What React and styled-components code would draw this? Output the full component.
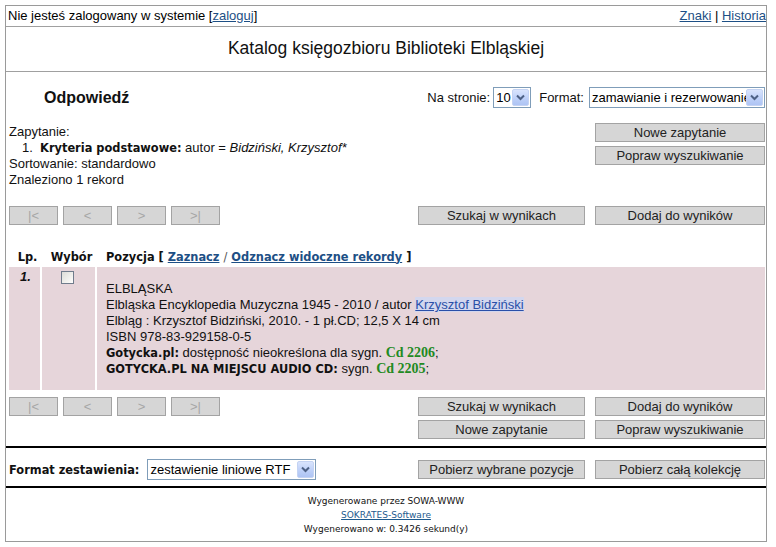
import React from "react";
import styled, { createGlobalStyle } from "styled-components";

const Global = createGlobalStyle`
  html, body { margin: 0; padding: 0; background: #fff; }
  body { font-family: "Liberation Sans", Arial, sans-serif; font-size: 13px; color: #000; }
  * { box-sizing: border-box; }
`;

const Page = styled.div`
  margin: 5px 0 0 5px;
  width: 762px;
  border: 1px solid #9a9a9a;
  line-height: 16px;
`;

const TopBar = styled.div`
  height: 21px;
  display: flex;
  justify-content: space-between;
  align-items: center;
  padding: 0 0 1px 2px;
  border-bottom: 1px solid #a0a0a0;
`;

const Link = styled.a`
  color: ${(p) => (p.$tone === "author" ? "#2a4fa8" : "#1d4f85")};
  text-decoration: underline;
  cursor: pointer;
  font-weight: ${(p) => (p.$bold ? "bold" : "inherit")};
  background: ${(p) => (p.$tone === "author" ? "#d3d7ee" : "transparent")};
`;

const TitleBar = styled.div`
  height: 45px;
  display: flex;
  align-items: center;
  justify-content: center;
  font-size: 17.5px;
  color: #111;
  border-bottom: 1px solid #a0a0a0;
  padding-bottom: 2px;
`;

const Main = styled.div`
  padding: 0 1px 0 3px;
`;

const HeadingRow = styled.div`
  height: 51px;
  display: flex;
  align-items: center;
  justify-content: space-between;
`;

const Heading = styled.div`
  font-size: 16px;
  font-weight: bold;
  padding-left: 35px;
  color: #111;
`;

const Controls = styled.div`
  display: flex;
  align-items: center;
`;

const Label = styled.span`
  margin-right: ${(p) => p.$mr || 5}px;
  margin-left: ${(p) => p.$ml || 0}px;
  color: #111;
`;

const SelectBox = styled.div`
  width: ${(p) => p.$width}px;
  height: 21px;
  border: 1px solid #7f9db9;
  background: #fff;
  display: flex;
  align-items: center;
  padding: 1px 1px 1px 0;
`;

const SelectText = styled.span`
  flex: 1;
  overflow: hidden;
  white-space: nowrap;
  padding-left: 2px;
  color: #000;
`;

const SelectArrow = styled.span`
  width: 17px;
  height: 17px;
  flex: none;
  border: 1px solid #c4d3f3;
  border-radius: 2px;
  background: linear-gradient(180deg, #d9e4fd 0%, #bccff8 60%, #aec4f4 100%);
  display: flex;
  align-items: center;
  justify-content: center;
`;

const Select = ({ width, children }) => (
  <SelectBox $width={width}>
    <SelectText>{children}</SelectText>
    <SelectArrow>
      <svg width="9" height="7" viewBox="0 0 9 7">
        <path d="M1 1.5 L4.5 5 L8 1.5" fill="none" stroke="#4d6185" strokeWidth="2" />
      </svg>
    </SelectArrow>
  </SelectBox>
);

const QueryBlock = styled.div`
  display: flex;
  justify-content: space-between;
  align-items: flex-start;
`;

const QueryText = styled.div`
  line-height: 16px;
  color: #111;
  padding-top: 1px;
  margin-bottom: -1px;
`;

const Indent = styled.div`
  padding-left: 13px;
`;

const Strong = styled.span`
  font-family: "DejaVu Sans", Verdana, sans-serif;
  font-weight: bold;
  font-size: 11.4px;
  color: #111;
`;

const ButtonColumn = styled.div`
  display: flex;
  flex-direction: column;
  align-items: flex-end;
  gap: 4px;
`;

const Button = styled.button`
  width: ${(p) => p.$width || 170}px;
  height: 19px;
  padding: 0;
  margin: 0;
  border: 1px solid #a3a3a3;
  background: #d6d6d6;
  font-family: "Liberation Sans", Arial, sans-serif;
  font-size: 13px;
  line-height: 16px;
  color: ${(p) => (p.$disabled ? "#a6a6a6" : "#222")};
  cursor: ${(p) => (p.$disabled ? "default" : "pointer")};
`;

const PagerRow = styled.div`
  display: flex;
  justify-content: space-between;
  align-items: center;
  margin-top: ${(p) => p.$mt || 0}px;
`;

const Group = styled.div`
  display: flex;
  gap: ${(p) => p.$gap}px;
  margin-left: ${(p) => (p.$right ? "auto" : "0")};
`;

const ResultsGrid = styled.div`
  display: grid;
  grid-template-columns: 31px 53px 1fr;
  column-gap: 2px;
  margin-top: 21px;
`;

const HeadCell = styled.div`
  height: 21px;
  display: flex;
  align-items: center;
  justify-content: ${(p) => (p.$left ? "flex-start" : "center")};
  padding-left: ${(p) => (p.$left ? 9 : 6)}px;
  font-family: "DejaVu Sans", Verdana, sans-serif;
  font-weight: bold;
  font-size: 11.4px;
  color: #111;
  white-space: nowrap;
`;

const Slash = styled.span`
  font-weight: normal;
  color: #555;
  margin: 0 4px;
`;

const Cell = styled.div`
  background: #e6d5da;
  min-height: 123px;
  padding: ${(p) => p.$pad};
`;

const Index = styled.span`
  font-weight: bold;
  font-style: italic;
  font-size: 13px;
  color: #111;
`;

const Checkbox = styled.span`
  display: block;
  width: 13px;
  height: 13px;
  border: 1px solid #707c8c;
  background: linear-gradient(135deg, #dcdcd7 0%, #f4f4f1 70%, #ffffff 100%);
`;

const RecordLine = styled.div`
  line-height: 16px;
  color: #111;
  white-space: nowrap;
`;

const Shelf = styled.span`
  font-family: "Liberation Serif", "Times New Roman", serif;
  font-weight: bold;
  font-size: 14px;
  color: #228a22;
`;

const Rule = styled.div`
  height: 2px;
  background: #000;
  margin-top: ${(p) => p.$mt || 0}px;
`;

const FormatRow = styled.div`
  display: flex;
  align-items: center;
  padding: 11px 1px 6px 3px;
`;

const FormatLabel = styled(Strong)`
  margin-right: 8px;
`;

const Footer = styled.div`
  padding: 6px 0 5px;
  text-align: center;
  font-family: "DejaVu Sans", Verdana, sans-serif;
  font-size: 9px;
  line-height: 14px;
  color: #111;
`;

const FooterLink = styled.a`
  color: #1d5a8e;
  text-decoration: underline;
`;

const Pager = () => (
  <Group $gap={5}>
    <Button $width={49} $disabled>|&lt;</Button>
    <Button $width={49} $disabled>&lt;</Button>
    <Button $width={49} $disabled>&gt;</Button>
    <Button $width={49} $disabled>&gt;|</Button>
  </Group>
);

export default function App() {
  return (
    <>
      <Global />
      <Page>
        <TopBar>
          <span>
            Nie jesteś zalogowany w systemie [<Link>zaloguj</Link>]
          </span>
          <span>
            <Link>Znaki</Link> | <Link>Historia</Link>
          </span>
        </TopBar>
        <TitleBar>Katalog księgozbioru Biblioteki Elbląskiej</TitleBar>
        <Main>
          <HeadingRow>
            <Heading>Odpowiedź</Heading>
            <Controls>
              <Label $mr={3}>Na stronie:</Label>
              <Select width={38}>10</Select>
              <Label $ml={8}>Format:</Label>
              <Select width={176}>zamawianie i rezerwowanie</Select>
            </Controls>
          </HeadingRow>

          <QueryBlock>
            <QueryText>
              <div>Zapytanie:</div>
              <Indent>
                1.&nbsp; <Strong>Kryteria podstawowe:</Strong> autor ={" "}
                <i>Bidziński, Krzysztof*</i>
              </Indent>
              <div>Sortowanie: standardowo</div>
              <div>Znaleziono 1 rekord</div>
            </QueryText>
            <ButtonColumn>
              <Button>Nowe zapytanie</Button>
              <Button>Popraw wyszukiwanie</Button>
            </ButtonColumn>
          </QueryBlock>

          <PagerRow $mt={19}>
            <Pager />
            <Group $gap={10}>
              <Button $width={167}>Szukaj w wynikach</Button>
              <Button>Dodaj do wyników</Button>
            </Group>
          </PagerRow>

          <ResultsGrid>
            <HeadCell>Lp.</HeadCell>
            <HeadCell>Wybór</HeadCell>
            <HeadCell $left>
              Pozycja [&nbsp;<Link $bold>Zaznacz</Link>
              <Slash>/</Slash>
              <Link $bold>Odznacz widoczne rekordy</Link>&nbsp;]
            </HeadCell>

            <Cell $pad="2px 0 0 11px">
              <Index>1.</Index>
            </Cell>
            <Cell $pad="4px 0 0 19px">
              <Checkbox />
            </Cell>
            <Cell $pad="14px 0 0 9px">
              <RecordLine>ELBLĄSKA</RecordLine>
              <RecordLine>
                Elbląska Encyklopedia Muzyczna 1945 - 2010 / autor{" "}
                <Link $tone="author">Krzysztof Bidziński</Link>
              </RecordLine>
              <RecordLine>Elbląg : Krzysztof Bidziński, 2010. - 1 pł.CD; 12,5 X 14 cm</RecordLine>
              <RecordLine>ISBN 978-83-929158-0-5</RecordLine>
              <RecordLine>
                <Strong>Gotycka.pl:</Strong> dostępność nieokreślona dla sygn.{" "}
                <Shelf>Cd 2206</Shelf>;
              </RecordLine>
              <RecordLine>
                <Strong>GOTYCKA.PL NA MIEJSCU AUDIO CD:</Strong> sygn.{" "}
                <Shelf>Cd 2205</Shelf>;
              </RecordLine>
            </Cell>
          </ResultsGrid>

          <PagerRow $mt={7}>
            <Pager />
            <Group $gap={10}>
              <Button $width={167}>Szukaj w wynikach</Button>
              <Button>Dodaj do wyników</Button>
            </Group>
          </PagerRow>
          <PagerRow $mt={4}>
            <Group $gap={10} $right>
              <Button $width={167}>Nowe zapytanie</Button>
              <Button>Popraw wyszukiwanie</Button>
            </Group>
          </PagerRow>
        </Main>

        <Rule $mt={7} />
        <FormatRow>
          <FormatLabel>Format zestawienia:</FormatLabel>
          <Select width={169}>zestawienie liniowe RTF</Select>
          <Group $gap={10} $right>
            <Button $width={167}>Pobierz wybrane pozycje</Button>
            <Button>Pobierz całą kolekcję</Button>
          </Group>
        </FormatRow>
        <Rule />
        <Footer>
          <div>Wygenerowane przez SOWA-WWW</div>
          <div>
            <FooterLink>SOKRATES-Software</FooterLink>
          </div>
          <div>Wygenerowano w: 0.3426 sekund(y)</div>
        </Footer>
      </Page>
    </>
  );
}
